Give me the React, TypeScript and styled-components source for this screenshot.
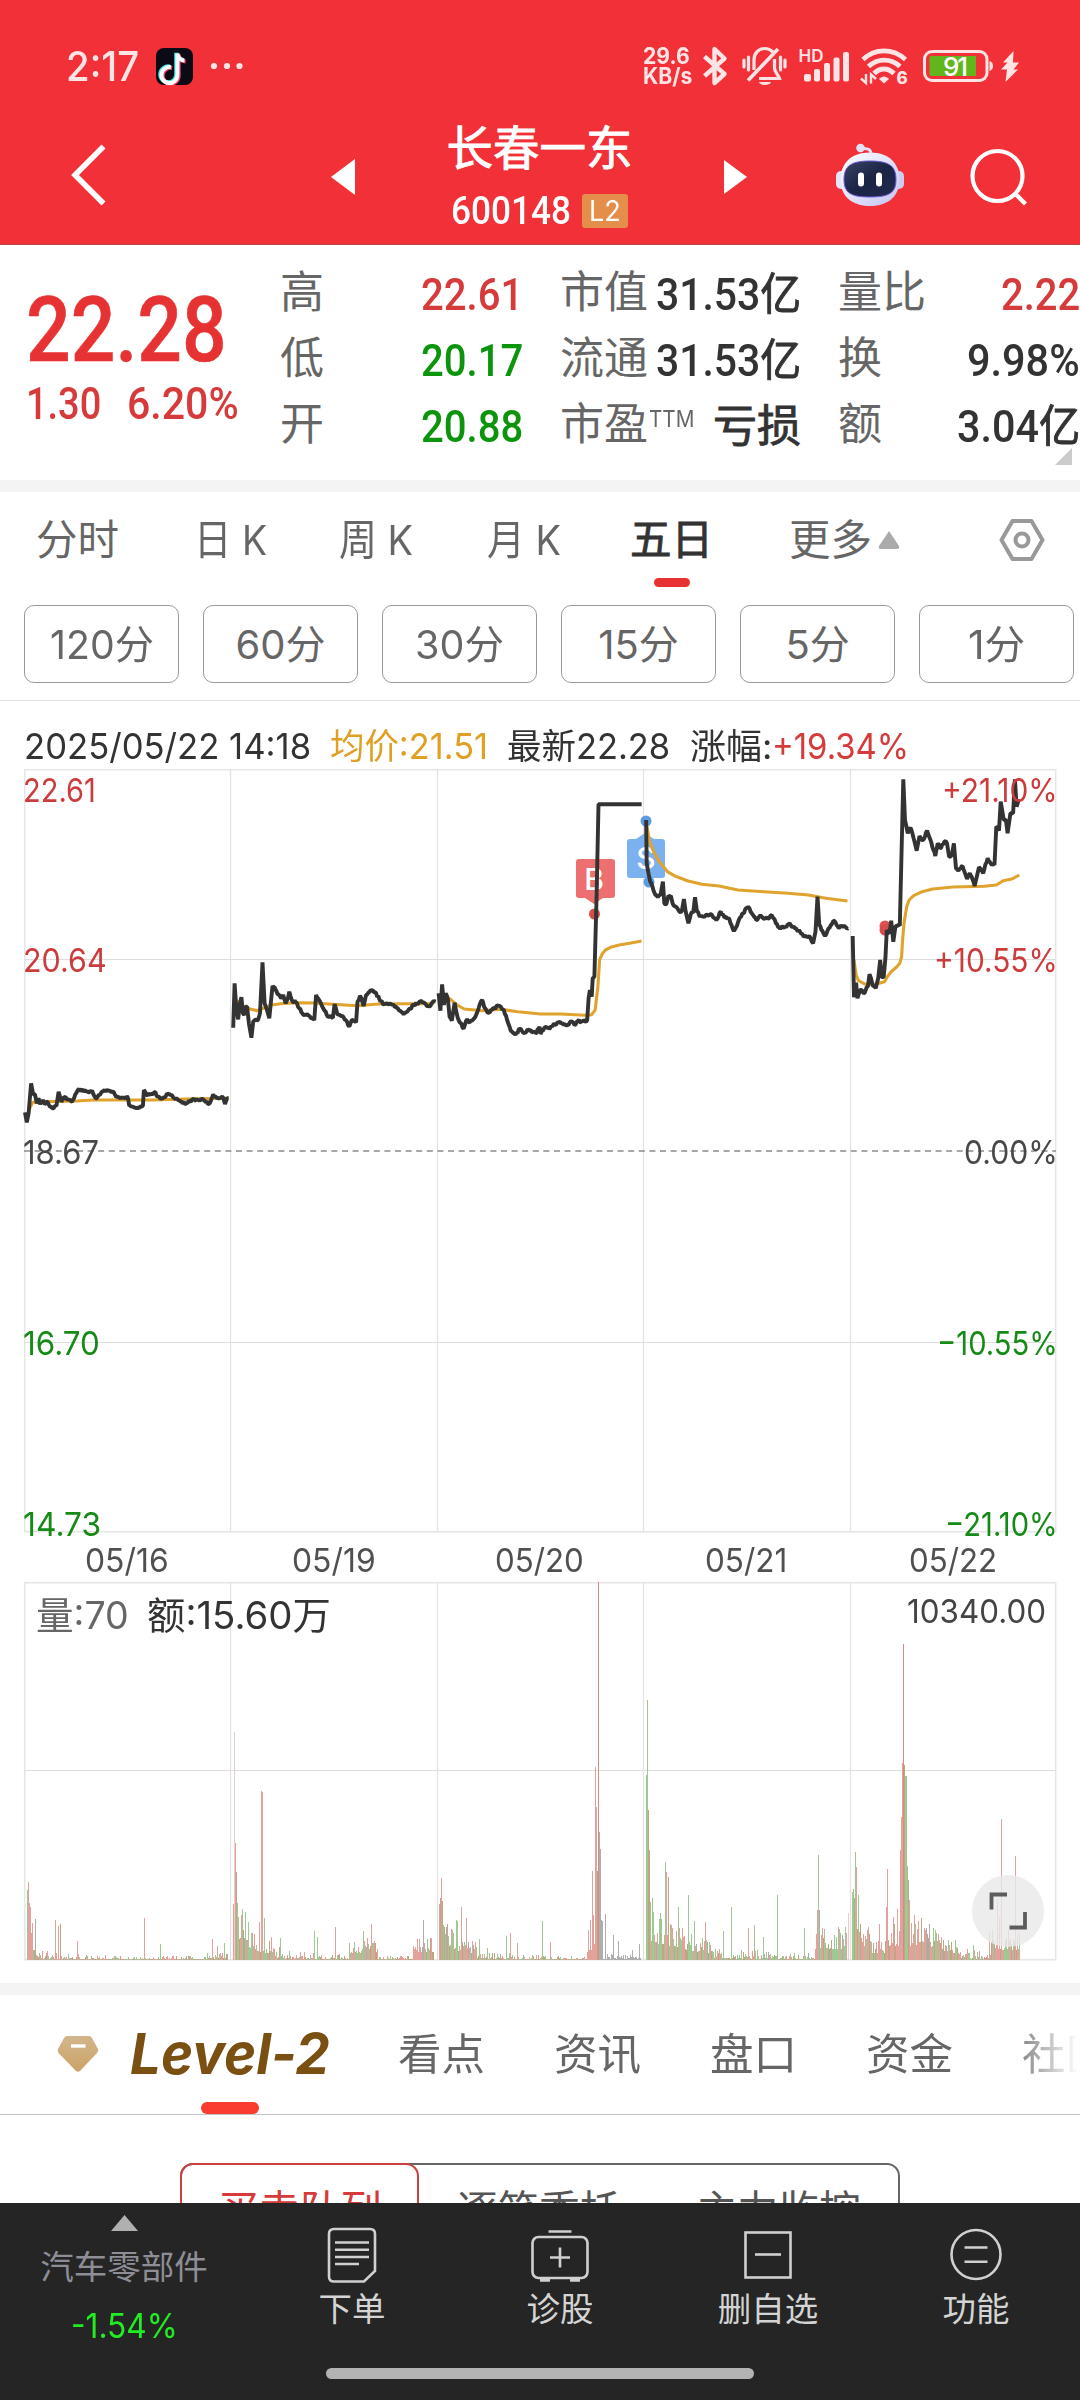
import React, { useLayoutEffect, useRef, useState } from "react";
import styled, { createGlobalStyle } from "styled-components";

const SANS = `"Inter", "Noto Sans CJK SC", sans-serif`;
const DIN = `"Roboto", "Noto Sans CJK SC", sans-serif`;
const RED = "#d63a3a";
const GREEN = "#0c940c";

const GlobalStyle = createGlobalStyle`
  * { box-sizing: border-box; }
  body { margin: 0; background: #fff; font-family: ${SANS}; }
  svg { display: block; flex: none; overflow: visible; }
`;

/* ---------- width-fitted label ---------- */
const FitBox = styled.span<{ $w: number }>`
  display: inline-block;
  width: ${(p) => p.$w}px;
  white-space: nowrap;
  flex: none;
`;
const FitInner = styled.span`
  display: inline-block;
  transform-origin: 0 50%;
`;
function Fit({ w, children }: { w: number; children: React.ReactNode }) {
  const ref = useRef<HTMLSpanElement>(null);
  const [scale, setScale] = useState(1);
  useLayoutEffect(() => {
    if (ref.current) setScale(w / ref.current.offsetWidth);
  }, [w]);
  return (
    <FitBox $w={w}>
      <FitInner ref={ref} style={{ transform: `scaleX(${scale})` }}>
        {children}
      </FitInner>
    </FitBox>
  );
}

/* ---------- shell ---------- */
const Page = styled.div`
  width: 1080px;
  height: 2400px;
  display: flex;
  flex-direction: column;
  overflow: hidden;
  background: #fff;
`;
const Main = styled.main`
  height: 2203px;
  flex: none;
  overflow: hidden;
`;
const Band = styled.div`
  height: 12px;
  background: #f4f4f4;
`;

/* ---------- header ---------- */
const Header = styled.header`
  height: 245px;
  background: #f23037;
  border-bottom: 1px solid #b8454c;
  color: #fff;
`;
const StatusBar = styled.div`
  height: 106px;
  padding: 26px 0 0 66px;
  display: flex;
  align-items: center;
  color: #ffe4e6;
`;
const Clock = styled.div`
  font-size: 41px;
  line-height: 48px;
  font-weight: 500;
  width: 90px;
`;
const StatusIcons = styled.div`
  margin-left: auto;
  width: 437px;
  display: grid;
  grid-template-columns: 60px 39px 57px 62px 62px 78px 18px;
  align-items: center;
`;
const Speed = styled.div`
  font-size: 22.5px;
  line-height: 20.5px;
  font-weight: 700;
  display: flex;
  flex-direction: column;
`;
const NavBar = styled.div`
  height: 138px;
  display: grid;
  grid-template-columns: 331px 24px 369px 24px 88px 68px 66px 60px;
  align-items: center;
`;
const BackCell = styled.div`
  padding: 0 0 0 69px;
`;
const TitleBlock = styled.div`
  display: flex;
  flex-direction: column;
  align-items: center;
  padding-bottom: 3px;
`;
const Title = styled.h1`
  margin: 0;
  font-size: 46.5px;
  line-height: 56px;
  font-weight: 400;
  -webkit-text-stroke: 0.9px currentColor;
`;
const CodeRow = styled.div`
  display: flex;
  align-items: center;
  gap: 11px;
  font: 500 39px/34px ${DIN};
  margin-top: 18px;
`;
const LevelBadge = styled.span`
  width: 46px;
  height: 34px;
  border-radius: 3px;
  background: #e58d4a;
  font: 400 28px/34px ${SANS};
  display: flex;
  justify-content: center;
`;

/* ---------- quote ---------- */
const Quote = styled.section`
  height: 235px;
  display: grid;
  grid-template-columns: 243px 242px 240px 241px;
  column-gap: 38px;
  position: relative;
`;
const PriceCol = styled.div`
  padding: 41px 0 0 26px;
  color: #e63232;
`;
const Price = styled.div`
  font: 500 90px/90px ${DIN};
  -webkit-text-stroke: 0.6px currentColor;
`;
const Change = styled.div`
  margin-top: 6px;
  display: flex;
  gap: 26px;
  color: ${RED};
  font: 500 44px/44px ${DIN};
`;
const StatCol = styled.div`
  padding-top: 14px;
`;
const Stat = styled.div`
  height: 66px;
  display: flex;
  justify-content: space-between;
  align-items: center;
  color: #666;
  font-size: 44px;
  line-height: 66px;
  margin-left: -1px;
  white-space: nowrap;
`;
const StatValue = styled.span<{ $c?: string }>`
  color: ${(p) => p.$c || "#333"};
  font: 500 44px/66px ${DIN};
  padding-top: 5px;
`;
const Unit = styled.span`
  font-weight: 400;
  -webkit-text-stroke: 0.9px currentColor;
`;
const Sup = styled.span`
  font-size: 23px;
  line-height: 20px;
  display: inline-block;
  transform: translateY(-13px);
  margin-left: 1px;
`;
const Corner = styled.i`
  position: absolute;
  right: 8px;
  bottom: 15px;
  border-bottom: 17px solid #ccc;
  border-left: 17px solid transparent;
`;

/* ---------- period tabs ---------- */
const PeriodTabs = styled.nav`
  height: 95px;
  padding-left: 36px;
  display: flex;
  align-items: center;
`;
const PeriodTab = styled.div<{ $w: number; $active?: boolean }>`
  width: ${(p) => p.$w}px;
  height: 95px;
  line-height: 94px;
  font-size: 41.5px;
  color: ${(p) => (p.$active ? "#333" : "#666")};
  -webkit-text-stroke: ${(p) => (p.$active ? "0.9px #333" : "0")};
  position: relative;
  display: flex;
  align-items: center;
  gap: 6px;
`;
const Underline = styled.i<{ $x: number; $w: number; $h: number; $c: string }>`
  position: absolute;
  left: ${(p) => p.$x}px;
  bottom: 0;
  width: ${(p) => p.$w}px;
  height: ${(p) => p.$h}px;
  border-radius: ${(p) => p.$h / 2}px;
  background: ${(p) => p.$c};
`;
const SettingsCell = styled.div`
  margin: 0 35px 0 auto;
`;
const Pills = styled.div`
  padding: 18px 0 17px 24px;
  display: flex;
  gap: 24px;
  border-bottom: 1px solid #e0e0e0;
`;
const Pill = styled.button`
  flex: none;
  width: 155px;
  height: 78px;
  border: 1px solid #999;
  border-radius: 10px;
  background: #fff;
  color: #666;
  font: 400 40px/76px ${SANS};
  padding: 1px 0 0;
`;

/* ---------- chart ---------- */
const InfoLine = styled.div`
  height: 68px;
  padding: 23px 0 0 24px;
  display: flex;
  font-size: 35.5px;
  line-height: 46px;
  color: #333;
`;
const InfoItem = styled.span<{ $c?: string; $gap?: number }>`
  color: ${(p) => p.$c || "#333"};
  margin-left: ${(p) => p.$gap || 0}px;
`;
const Pane = styled.div<{ $h: number }>`
  position: relative;
  width: 1032px;
  height: ${(p) => p.$h}px;
  margin-left: 24px;
`;
const AxisLabel = styled.span<{ $y: number; $c: string; $right?: boolean }>`
  position: absolute;
  top: ${(p) => p.$y - 20}px;
  ${(p) => (p.$right ? "right: -2px;" : "left: -1px;")}
  color: ${(p) => p.$c};
  font-size: 33px;
  line-height: 40px;
`;
const Dates = styled.div`
  height: 50px;
  margin-left: 24px;
  width: 1032px;
  display: grid;
  grid-template-columns: repeat(5, 1fr);
  justify-items: center;
  font-size: 33px;
  line-height: 57px;
  color: #505050;
`;
const VolumeText = styled.div`
  position: absolute;
  left: 12px;
  right: 10px;
  top: 11px;
  display: flex;
  gap: 18px;
  font-size: 38px;
  line-height: 44px;
  color: #333;
`;
const VolumeQty = styled.span`
  color: #666;
`;
const VolumeMax = styled.span`
  margin-left: auto;
  font-size: 32.5px;
  line-height: 37px;
  color: #444;
`;
const ExpandButton = styled.button`
  position: absolute;
  left: 948px;
  top: 293px;
  width: 72px;
  height: 72px;
  border: 0;
  border-radius: 50%;
  background: rgba(233, 233, 233, 0.82);
  padding: 0;
`;
const ChartFoot = styled.div`
  height: 23px;
`;

/* ---------- detail tabs ---------- */
const DetailBar = styled.div`
  border-bottom: 1px solid #c4c4c4;
`;
const DetailTabs = styled.nav`
  height: 119px;
  padding-left: 57px;
  display: flex;
  overflow: hidden;
  mask-image: linear-gradient(to right, #000 1005px, transparent 1078px);
`;
const Gem = styled.div`
  flex: none;
  width: 73px;
  padding-top: 41px;
`;
const LevelTab = styled.div`
  position: relative;
  width: 268px;
  flex: none;
  color: #7a4f12;
  font: italic 700 56px/119px ${SANS};
`;
const DetailTab = styled.div`
  width: 156px;
  flex: none;
  font-size: 43.5px;
  line-height: 118px;
  color: #666;
  white-space: nowrap;
`;
const Segments = styled.div`
  margin: 48px 0 0 180px;
  width: 720px;
  height: 92px;
  border: 2px solid #666;
  border-radius: 13px;
  display: flex;
`;
const Segment = styled.div<{ $active?: boolean }>`
  width: 240px;
  height: 92px;
  margin: -2px 0 0 ${(p) => (p.$active ? "-2px" : "0")};
  border: 2px solid ${(p) => (p.$active ? "#cc3f3f" : "transparent")};
  border-radius: 13px;
  color: ${(p) => (p.$active ? "#d63a3a" : "#555")};
  font-size: 41px;
  line-height: 90px;
  text-align: center;
  white-space: nowrap;
`;

/* ---------- bottom bar ---------- */
const BottomBar = styled.footer`
  height: 197px;
  background: #252525;
  color: #d4d4d4;
  display: flex;
  flex-direction: column;
  align-items: center;
`;
const BottomRow = styled.div`
  width: 1080px;
  height: 165px;
  display: grid;
  grid-template-columns: 248px repeat(4, 208px);
`;
const Sector = styled.div`
  display: flex;
  flex-direction: column;
  align-items: center;
  padding-top: 12px;
  font-size: 33.5px;
  line-height: 38px;
  color: #8e8e96;
`;
const SectorName = styled.div`
  margin-top: 17px;
`;
const SectorChange = styled.div`
  margin-top: 21px;
  color: #22ec22;
  font-size: 34px;
`;
const Action = styled.div`
  display: flex;
  flex-direction: column;
  align-items: center;
  font-size: 33.5px;
  line-height: 38px;
`;
const ActionIcon = styled.div`
  height: 87px;
  padding-top: 22px;
`;
const HomeBar = styled.div`
  width: 428px;
  height: 11px;
  border-radius: 6px;
  background: #b3b3b3;
`;

/* ---------- price series ---------- */
type Pt = [number, number];
const parse = (s: string): Pt[] => s.trim().split(/\s+/).map((p) => p.split(",").map(Number) as Pt);

function rng(seed: number) {
  let s = seed;
  return () => {
    s = (s * 1664525 + 1013904223) % 4294967296;
    return s / 4294967296;
  };
}
const toPane = (pts: Pt[], half: 0 | 1): Pt[] =>
  pts.map(([x, y]) => [half ? 516 + x / 2.904 : x / 2.8 - 24, y / 3 - 9]);

/* minute ticks between the sampled prices */
function ticks(pts: Pt[], seed: number): Pt[] {
  const r = rng(seed);
  const out: Pt[] = [];
  for (let i = 0; i < pts.length - 1; i++) {
    const [x0, y0] = pts[i];
    const [x1, y1] = pts[i + 1];
    out.push(pts[i]);
    const dx = x1 - x0;
    if (dx > 25 || Math.abs(y1 - y0) / Math.max(dx, 0.1) > 4) continue;
    const n = Math.floor(dx / 0.95);
    for (let k = 1; k < n; k++) out.push([x0 + (dx * k) / n, y0 + ((y1 - y0) * k) / n + (r() - 0.5) * 3]);
  }
  out.push(pts[pts.length - 1]);
  return out;
}
const line = (pts: Pt[]) => pts.map(([x, y]) => `${x.toFixed(1)},${y.toFixed(1)}`).join(" ");

const P1 = toPane(parse("70,1057 75,1087 80,1060 87,970 93,1003 98,1003 103,1030 108,1015 112,1033 120,1020 125,1033 133,1025 140,1040 150,1045 158,1038 164,995 172,1025 180,1012 190,1018 202,1025 213,1000 218,990 235,992 247,997 258,992 268,1015 280,1005 290,993 315,995 325,1010 340,1012 358,1013 362,1038 378,1045 400,1038 403,990 410,1005 432,997 445,1010 455,1017 470,1002 485,1012 500,1022 520,1031 540,1018 570,1020 585,1032 592,1018 597,1003 605,1013 625,1013 630,1032 636,1015 640,1015"), 0);
const P2 = toPane(parse("653,803 657,670 662,750 667,778 671,735 676,712 680,760 684,765 688,740 692,740 697,790 704,833 709,785 714,780 722,780 728,760 735,607 741,730 746,745 754,775 763,678 772,690 780,703 787,715 793,705 800,730 806,715 810,695 817,720 828,727 838,745 850,765 860,762 868,770 880,780 885,705 895,722 905,745 915,765 932,773 937,732 944,760 955,768 965,778 978,800 985,780 997,787 1001,725 1008,707 1018,738 1025,705 1038,690 1050,697 1062,717 1075,733 1090,732 1105,740 1120,752 1130,763 1145,747 1160,735 1180,722 1195,738 1205,738 1212,725 1220,725"), 0);
const P3 = [
  ...toPane(parse("1228,700 1233,752 1238,673 1243,735 1248,700 1254,718 1259,770 1265,782 1273,728 1278,757 1285,782 1298,806 1308,778 1315,788 1325,778 1335,760 1340,745 1350,720 1358,745 1368,758 1378,750 1395,737 1410,748 1420,780 1430,812 1443,825 1455,807 1465,818 1480,810 1500,820 1511,800"), 0),
  ...toPane(parse("2,822 12,805 30,803 50,788 80,795 90,783 100,795 110,783 130,783 137,780 141,715 145,690 150,710 153,655 158,650 164,420 170,133 295,133"), 1),
];
const P4 = toPane(parse("308,180 310,310 315,340 320,365 326,378 330,392 335,405 342,412 350,405 357,365 361,430 367,432 373,407 380,408 385,430 395,440 405,455 412,452 418,417 423,455 431,490 438,462 445,458 450,412 456,455 465,470 480,467 500,466 515,477 525,455 535,472 550,478 563,513 575,487 590,460 605,440 615,460 628,480 640,465 650,477 665,475 673,465 685,490 695,502 715,502 725,490 740,505 755,515 770,528 785,533 793,550 800,515 806,410 811,495 820,512 828,528 838,505 852,482 865,500 880,500 895,505"), 1);
const P5 = toPane(parse("908,528 912,712 918,668 922,715 930,690 940,700 952,680 957,643 965,672 975,685 982,655 988,600 992,650 998,650 1003,595 1007,510 1015,520 1020,482 1026,545 1032,500 1045,497 1055,58 1060,180 1068,220 1076,203 1085,235 1094,272 1102,228 1112,240 1124,212 1134,240 1148,288 1155,250 1162,265 1174,245 1182,250 1188,290 1196,285 1202,250 1208,325 1215,333 1227,318 1240,357 1248,340 1262,378 1275,322 1287,340 1300,295 1312,315 1320,315 1325,200 1333,212 1338,125 1347,180 1353,180 1358,220 1366,160 1374,160 1379,58 1384,140 1390,118"), 1);

const AVERAGES: Pt[][] = [
  toPane(parse("80,1055 85,1040 92,1027 110,1025 215,1023 260,1020 430,1020 520,1017 640,1015"), 0),
  toPane(parse("660,720 685,740 700,747 720,752 760,735 785,731 830,728 880,729 920,732 1000,737 1060,732 1150,731 1215,731"), 0),
  [
    ...toPane(parse("1238,700 1260,717 1280,735 1300,747 1350,752 1400,748 1450,755 1513,762"), 0),
    ...toPane(parse("60,762 130,766 150,764 160,750 168,680 173,600 180,583 190,570 205,562 230,555 260,550 295,543"), 1),
  ],
  toPane(parse("310,195 318,245 330,275 345,303 360,322 370,335 390,347 430,363 470,373 520,378 575,390 650,395 720,400 780,405 830,415 893,423"), 1),
  toPane(parse("912,600 918,645 925,662 945,673 965,675 985,670 1000,665 1010,648 1020,635 1035,622 1045,610 1050,590 1053,540 1057,490 1065,440 1072,420 1085,407 1110,395 1140,387 1200,381 1290,379 1325,375 1345,362 1370,357 1392,345"), 1),
];
const GRID_X = [206.5, 413.5, 619.5, 826.5];

function PriceChart() {
  return (
    <svg width="1032" height="763" viewBox="0 0 1032 763">
      <rect x="0.7" y="0.7" width="1031" height="762" fill="none" stroke="#e6e6e6" strokeWidth="1.6" />
      {GRID_X.map((x) => (
        <line key={x} x1={x} x2={x} y1="0" y2="763" stroke="#e2e2e2" strokeWidth="1.2" />
      ))}
      {[190.5, 573.5].map((y) => (
        <line key={y} x1="0" x2="1032" y1={y} y2={y} stroke="#dedede" />
      ))}
      <line x1="0" x2="1032" y1="382" y2="382" stroke="#8a8a8a" strokeWidth="1.6" strokeDasharray="6 4.6" />
      <g fill="#ee6f6f">
        <path d="M555 90h33a3 3 0 0 1 3 3v33a3 3 0 0 1-3 3h-9l-9 6-9-6h-6a3 3 0 0 1-3-3V93a3 3 0 0 1 3-3z" />
        <circle cx="570.5" cy="145" r="5.5" fill="#d94c4c" />
      </g>
      <g fill="#7cb1ef">
        <path d="M606 70h6l9-6 9 6h8a3 3 0 0 1 3 3v33a3 3 0 0 1-3 3h-32a3 3 0 0 1-3-3V73a3 3 0 0 1 3-3z" />
        <circle cx="622" cy="52" r="5.5" fill="#5c9be0" />
        <circle cx="625" cy="113" r="5.5" fill="#5c9be0" />
      </g>
      <g fill="#fff" fontFamily="Inter, sans-serif" fontSize="30" fontWeight="500" textAnchor="middle">
        <text x="570" y="121">B</text>
        <text x="622" y="100">S</text>
      </g>
      <circle cx="861" cy="157" r="5.5" fill="#e05050" />
      <circle cx="861" cy="161" r="5.5" fill="#d94c4c" />
      <g fill="none" strokeLinejoin="round">
        {AVERAGES.map((a, i) => (
          <polyline key={i} points={line(a)} stroke="#dfa32e" strokeWidth="3.1" />
        ))}
      </g>
      <g fill="none" stroke="#333" strokeWidth="3.9" strokeLinejoin="bevel">
        {[P1, P2, P3, P4, P5].map((p, i) => (
          <polyline key={i} points={line(ticks(p, 17 + i * 31))} />
        ))}
      </g>
    </svg>
  );
}

/* ---------- volume series: x, height, tone ---------- */
const SPIKES = `27,70,g 28,78,r 29,57,r 30,53,r 31,27,r 32,37,r 35,41,k 55,40,r 58,34,r 60,36,b 77,19,r 144,42,r 160,16,g 212,21,r 217,14,r 224,17,g
233,56,r 234,228,p 235,117,r 236,88,b 237,57,g 238,43,g 241,45,r 242,51,g 245,48,g 248,38,g 252,27,r 259,38,r 261,169,r 262,168,r 264,42,g 271,23,r 280,22,g 314,29,g 317,23,g 335,33,r 363,29,g 367,22,r 371,36,r 423,40,k 427,21,g 431,22,r
439,56,r 440,62,b 441,82,r 442,59,b 443,35,g 447,36,k 451,31,r 456,40,g 457,39,g 461,53,r 466,42,r 479,21,g 506,24,g 510,27,r 517,17,r 542,39,g 550,18,r
588,30,r 590,40,r 592,89,r 593,45,r 595,193,r 596,153,r 597,89,b 598,378,R 599,128,k 600,111,k 601,34,k 602,34,k 605,46,k 613,25,k 618,19,k 632,10,k 639,16,k
646,185,g 647,260,g 648,150,b 649,110,b 650,57,g 652,62,g 653,48,g 660,45,g 665,98,g 666,88,r 668,83,b 671,35,g 678,53,g 682,32,r 688,65,g 694,39,g 705,38,r 723,29,g 731,53,g 748,32,r 754,35,g 763,23,g 777,65,g 804,32,g 817,50,r 818,105,g 819,50,k 834,25,g 838,33,r 845,33,g 848,47,p
852,68,g 853,71,g 854,62,b 855,108,g 856,93,r 858,65,g 860,36,b 868,33,r 879,36,r 886,53,r 887,91,r 893,34,r 897,51,r 900,110,r 901,143,r 902,197,r 903,316,R 904,195,b 905,184,g 906,184,g 907,94,g 908,80,b 909,60,r 914,45,r 918,39,r 925,30,r 933,32,g 948,20,g 955,20,g 973,15,g 989,28,r 997,60,r 999,43,r 1001,141,r 1015,104,r 1017,25,r`
  .trim()
  .split(/\s+/)
  .map((s) => s.split(","));

const TONES: Record<string, string> = {
  r: "#e4a09a",
  R: "#d98a84",
  g: "#9fc992",
  b: "#bba783",
  k: "#aeaeae",
  p: "#ecccc8",
};

function volumeBars() {
  const r = rng(91);
  const bars: { x: number; h: number; c: string }[] = [];
  const dayOf = (x: number) => Math.min(4, Math.floor((x - 24) / 206.5));
  const limit = (x: number) => {
    const d = dayOf(x);
    const t = (x - 24 - d * 206.5) / 206.5;
    if (d === 0) return 5 + 18 * Math.exp(-t * 7) + (t > 0.88 ? 6 : 0);
    if (d === 1) return 5 + 44 * Math.exp(-t * 6) + (Math.abs(t - 0.64) < 0.07 ? 14 : 0) + (t > 0.88 ? 17 : 0);
    if (d === 2) {
      if (t > 0.72 && t < 0.8) return 14 + (t - 0.72) * 500;
      if (t >= 0.8) return 8;
      return 4 + 44 * Math.exp(-t * 6);
    }
    if (d === 3) return 9 + 58 * Math.exp(-t * 5.5) + (t > 0.83 ? 22 : 0);
    if (t < 0.1) return 50 - t * 200;
    if (t < 0.17) return 20;
    if (t < 0.36) return 42;
    return 8 + 42 * Math.exp(-(t - 0.36) * 9) + (t > 0.68 ? 20 : 0);
  };
  for (let x = 25; x < 1020; x++) {
    const t = ((x - 24) % 206.5) / 206.5;
    if (t > 0.985 || t < 0.01) continue;
    const paused = x > 598 && x < 642;
    const v = r();
    const base = limit(x);
    const h = Math.max(1.5, base * (v * v * 0.72 + (base > 18 ? 0.34 : 0.1)));
    const pick = r();
    const red = dayOf(x) === 3 ? 0.3 : 0.42;
    bars.push({ x, h, c: paused ? "k" : x > 585 && x < 598 ? "r" : pick < red ? "r" : pick < 0.75 ? "g" : pick < 0.94 ? "b" : "k" });
  }
  return bars;
}

function VolumeChart() {
  return (
    <svg width="1032" height="378" viewBox="0 0 1032 378">
      <rect x="0.7" y="0.7" width="1031" height="377" fill="none" stroke="#e6e6e6" strokeWidth="1.6" />
      {GRID_X.map((x) => (
        <line key={x} x1={x} x2={x} y1="0" y2="378" stroke="#e2e2e2" strokeWidth="1.2" />
      ))}
      <line x1="0" x2="1032" y1="188.5" y2="188.5" stroke="#dedede" />
      <g shapeRendering="crispEdges">
        {volumeBars().map((b, i) => (
          <rect key={i} x={b.x - 24} y={378 - b.h} width="1" height={b.h} fill={TONES[b.c]} />
        ))}
        {SPIKES.map(([x, h, c], i) => (
          <rect key={i} x={+x - 24} y={378 - +h} width="1" height={+h} fill={TONES[c]} />
        ))}
      </g>
    </svg>
  );
}

/* ---------- icons ---------- */
const note = "M24 5v21.5a8 8 0 1 1-6.5-7.9M24 5c.6 4.4 3.3 6.8 7 7";
const TikTok = () => (
  <svg width="37" height="37" viewBox="0 0 37 37">
    <rect width="37" height="37" rx="8" fill="#0c0a14" />
    <g fill="none" strokeWidth="4" transform="translate(-2.6 .6)">
      <path d={note} stroke="#35e0dc" transform="translate(-1.2 -.8)" />
      <path d={note} stroke="#f2436b" transform="translate(1.2 .8)" />
      <path d={note} stroke="#fff" />
    </g>
  </svg>
);
const Dots = () => (
  <svg width="60" height="10" viewBox="0 0 60 10" fill="#ffe4e6">
    <circle cx="21" cy="5" r="3.1" />
    <circle cx="34" cy="5" r="3.1" />
    <circle cx="46.5" cy="5" r="3.1" />
  </svg>
);
const Bluetooth = () => (
  <svg width="25" height="40" viewBox="0 0 25 40" fill="none" stroke="#ffe4e6" strokeWidth="4.4" strokeLinejoin="round">
    <path d="M1.500 10.500l20 17.500L11.500 37V3l10 9.500L1.500 30" />
  </svg>
);
const Muted = () => (
  <svg width="45" height="40" viewBox="0 0 45 40" fill="none" stroke="#ffe4e6" strokeWidth="3.2">
    <path d="M2 14v7M6.500 11v13M38.500 11v13M43 14v7" strokeLinecap="round" />
    <path d="M12 24V14c0-7 5-11.500 10.500-11.500 3.500 0 6.500 1.500 8.500 3.500M32.500 13v9c0 4 4 7 5 10.500H17" />
    <path d="M6 34.500L36 3" strokeWidth="3.600" />
    <path d="M17 36h12c-1 4-11 4-12 0z" fill="#ffe4e6" stroke="none" />
  </svg>
);
const Signal = () => (
  <svg width="52" height="40" viewBox="0 0 52 40" fill="#ffe4e6">
    <text x="-0.500" y="15.500" fontFamily="Inter, sans-serif" fontSize="17" fontWeight="600">HD</text>
    <rect x="5" y="28" width="7" height="7.500" rx="2" />
    <rect x="15" y="23" width="6" height="12.500" rx="2" />
    <rect x="25" y="17" width="6" height="18.500" rx="2" />
    <rect x="34.500" y="11.500" width="6" height="24" rx="2" />
    <rect x="44" y="6" width="6" height="29.500" rx="2" />
  </svg>
);
const Wifi = () => (
  <svg width="48" height="40" viewBox="0 0 48 40" fill="none" stroke="#ffe4e6" strokeWidth="4.800">
    <path d="M2 13.500C14 2 32 2 44.500 13.500M7.500 20.500c9-8.500 22.500-8.500 31.500 0M13 27.500c6-6 14-6 20 0" />
    <path d="M23 37.500l-5-4.500c3-3.500 7-3.500 10 0z" fill="#ffe4e6" stroke="none" />
    <path d="M0 32.500l5 4.500V28M15 33l-5-4.500v9" strokeWidth="2.400" />
    <text x="35.500" y="38" fontFamily="Inter, sans-serif" fontSize="17" fontWeight="800" fill="#ffe4e6" stroke="none">6</text>
  </svg>
);
const Battery = () => (
  <svg width="72" height="34" viewBox="0 0 72 34">
    <rect x="1.500" y="2.500" width="62.500" height="29" rx="7.500" fill="none" stroke="#ffe4e6" strokeWidth="3" />
    <path d="M8 7h45v20H8q-1.500 0-1.500-2V9q0-2 1.500-2z" fill="#62b51b" />
    <path d="M66.500 12q3.500 1 3.500 5t-3.500 5z" fill="#ffe4e6" />
    <text x="32.500" y="26.500" textAnchor="middle" fontFamily="Inter, sans-serif" fontSize="26" fontWeight="500" fill="#fff" textLength="25">91</text>
  </svg>
);
const Bolt = () => (
  <svg width="18" height="33" viewBox="0 0 18 33" fill="#ffe4e6">
    <path d="M12.500 1L2 12.500h4.500L0 19.500h6L4.500 32 17 19.500h-4.500L18 12.500h-6z" />
  </svg>
);
const Back = () => (
  <svg width="40" height="66" viewBox="0 0 40 66" fill="none" stroke="#fff" strokeWidth="5.500">
    <path d="M34.500 4.500L6 33l28.500 28.500" />
  </svg>
);
const Robot = () => (
  <svg width="70" height="66" viewBox="0 -1 70 66">
    <defs>
      <linearGradient id="shell" x1="0" y1="0" x2="1" y2="1">
        <stop offset="0" stopColor="#fff" />
        <stop offset=".6" stopColor="#dcdcfa" />
        <stop offset="1" stopColor="#c5c2f0" />
      </linearGradient>
      <linearGradient id="visor" x1="0" y1="0" x2="1" y2="1">
        <stop offset="0" stopColor="#3b4466" />
        <stop offset=".5" stopColor="#1a2444" />
        <stop offset="1" stopColor="#222b4e" />
      </linearGradient>
    </defs>
    <path d="M35 12c0-5-2-7-9-6.500" fill="none" stroke="#e2dff8" strokeWidth="3" />
    <circle cx="24.500" cy="5" r="4.300" fill="#e4e0f7" />
    <rect x="0" y="28" width="12" height="18" rx="5" fill="#e4e4fb" />
    <rect x="56" y="28" width="12" height="18" rx="5" fill="#cdcbf3" />
    <path d="M34 9.500c19 0 29.500 11 29.500 27S53 63 34 63 4.500 52.500 4.500 36.500s10.500-27 29.500-27z" fill="url(#shell)" />
    <path d="M34 18c19 0 26 5 26 18.500S53 54 34 54 8 50 8 36.500 15 18 34 18z" fill="url(#visor)" stroke="#6a5bd6" strokeWidth="1" />
    <rect x="22" y="29.500" width="6" height="14" rx="3" fill="#fff" />
    <rect x="40" y="29.500" width="6" height="14" rx="3" fill="#fff" />
  </svg>
);
const Search = () => (
  <svg width="60" height="60" viewBox="0 -3 60 60" fill="none" stroke="#fff" strokeWidth="4.200">
    <circle cx="27.500" cy="28" r="25" />
    <path d="M45.500 46l10 10" />
  </svg>
);
const Hexagon = () => (
  <svg width="46" height="44" viewBox="0 0 46 44" fill="none" stroke="#999" strokeWidth="4" strokeLinejoin="round">
    <path d="M13.500 3h19L43.500 22 32.500 41h-19L2.500 22z" />
    <circle cx="23" cy="22" r="6.500" />
  </svg>
);
const Triangle = ({ w, h, d, c }: { w: number; h: number; d: string; c: string }) => (
  <svg width={w} height={h} viewBox={`0 0 ${w} ${h}`} fill={c}>
    <path d={d} />
  </svg>
);
const GemIcon = () => (
  <svg width="42" height="36" viewBox="0 0 42 36">
    <defs>
      <linearGradient id="gem" x1="0" y1="0" x2="0" y2="1">
        <stop offset="0" stopColor="#d3b58c" />
        <stop offset="1" stopColor="#cca268" />
      </linearGradient>
    </defs>
    <path d="M10 0h22q2 0 3 2l6 11q1 2-1 4L23 35q-2 1.500-4 0L1.500 17q-1.500-2-.5-4L7 2q1-2 3-2z" fill="url(#gem)" />
    <path d="M14 10h14.500" stroke="#fff" strokeWidth="3.400" />
  </svg>
);
const Expand = () => (
  <svg width="72" height="72" viewBox="0 0 72 72" fill="none" stroke="#5c5c5c" strokeWidth="3.800">
    <path d="M19.500 34.500V19.500H35M53 37v15.500H37.500" />
  </svg>
);
const iconProps = { fill: "none", stroke: "#d0d0d0", strokeWidth: 2.6 };
const OrderIcon = () => (
  <svg width="50" height="58" viewBox="0 0 50 58" {...iconProps}>
    <path d="M7 4h36q5 0 5 5v37L37 56.500H7q-5 0-5-5V9q0-5 5-5z" />
    <path d="M8 17.500h34M8 24.700h34M8 32h34M8 39h24" />
  </svg>
);
const DiagnoseIcon = () => (
  <svg width="58" height="58" viewBox="0 0 58 58" {...iconProps}>
    <rect x="1.500" y="12" width="55" height="41" rx="6" />
    <path d="M17.500 6.500h23M29 22.500v20M19 32.500h20" />
    <path d="M9 55h10M39 55h10" strokeWidth="3.500" />
  </svg>
);
const RemoveIcon = () => (
  <svg width="48" height="58" viewBox="0 0 48 58" {...iconProps}>
    <rect x="1.500" y="7.500" width="45" height="45" />
    <path d="M11 29.500h26" />
  </svg>
);
const FunctionIcon = () => (
  <svg width="52" height="58" viewBox="0 0 52 58" {...iconProps}>
    <circle cx="26" cy="29.500" r="24.500" />
    <path d="M14.500 22.500h23M14.500 36.700h23" />
  </svg>
);

/* ---------- data ---------- */
const PILLS: [string, number][] = [["120分", 104], ["60分", 90], ["30分", 89], ["15分", 81], ["5分", 64], ["1分", 57]];
const AXIS: [number, string, number, string, number, string][] = [
  [20.5, "22.61", 72, "+21.10%", 116, "#cc3c3c"],
  [190.5, "20.64", 83, "+10.55%", 124, "#cc3c3c"],
  [382.5, "18.67", 75, "0.00%", 94, "#484848"],
  [573.500, "16.70", 76, "−10.55%", 121, "#168a16"],
  [754.500, "14.73", 77, "−21.10%", 113, "#168a16"],
];
const ACTIONS: [string, () => React.ReactElement][] = [
  ["下单", OrderIcon],
  ["诊股", DiagnoseIcon],
  ["删自选", RemoveIcon],
  ["功能", FunctionIcon],
];

export default function App() {
  return (
    <Page>
      <GlobalStyle />
      <Main>
        <Header>
          <StatusBar>
            <Clock><Fit w={73}>2:17</Fit></Clock>
            <TikTok />
            <Dots />
            <StatusIcons>
              <Speed>
                <Fit w={47}>29.6</Fit>
                <Fit w={49}>KB/s</Fit>
              </Speed>
              <Bluetooth />
              <Muted />
              <Signal />
              <Wifi />
              <Battery />
              <Bolt />
            </StatusIcons>
          </StatusBar>
          <NavBar>
            <BackCell><Back /></BackCell>
            <Triangle w={24} h={36} d="M24 2v36L0 20z" c="#fff" />
            <TitleBlock>
              <Title>长春一东</Title>
              <CodeRow>
                <Fit w={120}>600148</Fit>
                <LevelBadge><Fit w={32}>L2</Fit></LevelBadge>
              </CodeRow>
            </TitleBlock>
            <Triangle w={24} h={36} d="M0 3v34l23-17z" c="#fff" />
            <span />
            <Robot />
            <span />
            <Search />
          </NavBar>
        </Header>

        <Quote>
          <PriceCol>
            <Price><Fit w={201}>22.28</Fit></Price>
            <Change>
              <Fit w={75}>1.30</Fit>
              <Fit w={112}>6.20%</Fit>
            </Change>
          </PriceCol>
          <StatCol>
            <Stat>高<StatValue $c={RED}><Fit w={102}>22.61</Fit></StatValue></Stat>
            <Stat>低<StatValue $c={GREEN}><Fit w={102}>20.17</Fit></StatValue></Stat>
            <Stat>开<StatValue $c={GREEN}><Fit w={102}>20.88</Fit></StatValue></Stat>
          </StatCol>
          <StatCol>
            <Stat>市值<StatValue><Fit w={145}>31.53<Unit>亿</Unit></Fit></StatValue></Stat>
            <Stat>流通<StatValue><Fit w={145}>31.53<Unit>亿</Unit></Fit></StatValue></Stat>
            <Stat>
              <span>市盈<Sup><Fit w={45}>TTM</Fit></Sup></span>
              <StatValue><Unit>亏损</Unit></StatValue>
            </Stat>
          </StatCol>
          <StatCol>
            <Stat>量比<StatValue $c={RED}><Fit w={79}>2.22</Fit></StatValue></Stat>
            <Stat>换<StatValue><Fit w={113}>9.98%</Fit></StatValue></Stat>
            <Stat>额<StatValue><Fit w={123}>3.04<Unit>亿</Unit></Fit></StatValue></Stat>
          </StatCol>
          <Corner />
        </Quote>
        <Band />

        <PeriodTabs>
          <PeriodTab $w={158}>分时</PeriodTab>
          <PeriodTab $w={145}><Fit w={73}>日 K</Fit></PeriodTab>
          <PeriodTab $w={148}><Fit w={74}>周 K</Fit></PeriodTab>
          <PeriodTab $w={143}><Fit w={74}>月 K</Fit></PeriodTab>
          <PeriodTab $w={159} $active>
            五日
            <Underline $x={24} $w={36} $h={9} $c="#e63232" />
          </PeriodTab>
          <PeriodTab $w={130}>
            更多
            <Triangle w={22} h={18} d="M11 0l10 15q1 3-2 3H3q-3 0-2-3z" c="#aaa" />
          </PeriodTab>
          <SettingsCell><Hexagon /></SettingsCell>
        </PeriodTabs>
        <Pills>
          {PILLS.map(([t, w]) => (
            <Pill key={t}><Fit w={w}>{t}</Fit></Pill>
          ))}
        </Pills>

        <InfoLine>
          <InfoItem><Fit w={287}>2025/05/22 14:18</Fit></InfoItem>
          <InfoItem $gap={19} $c="#dfa024"><Fit w={158}>均价:21.51</Fit></InfoItem>
          <InfoItem $gap={19}><Fit w={163}>最新22.28</Fit></InfoItem>
          <InfoItem $gap={20}><Fit w={82}>涨幅:</Fit></InfoItem>
          <InfoItem $c={RED}><Fit w={137}>+19.34%</Fit></InfoItem>
        </InfoLine>
        <Pane $h={763}>
          <PriceChart />
          {AXIS.map(([y, price, pw, pct, cw, c]) => (
            <React.Fragment key={price}>
              <AxisLabel $y={y} $c={c}><Fit w={pw + 1}>{price}</Fit></AxisLabel>
              <AxisLabel $y={y} $c={c} $right><Fit w={cw}>{pct}</Fit></AxisLabel>
            </React.Fragment>
          ))}
        </Pane>
        <Dates>
          <Fit w={84}>05/16</Fit>
          <Fit w={84}>05/19</Fit>
          <Fit w={89}>05/20</Fit>
          <Fit w={82}>05/21</Fit>
          <Fit w={88}>05/22</Fit>
        </Dates>
        <Pane $h={378}>
          <VolumeChart />
          <VolumeText>
            <VolumeQty><Fit w={93}>量:70</Fit></VolumeQty>
            <Fit w={184}>额:15.60万</Fit>
            <VolumeMax><Fit w={139}>10340.00</Fit></VolumeMax>
          </VolumeText>
          <ExpandButton><Expand /></ExpandButton>
        </Pane>
        <ChartFoot />
        <Band />

        <DetailBar>
          <DetailTabs>
            <Gem><GemIcon /></Gem>
            <LevelTab>
              <Fit w={200}>Level-2</Fit>
              <Underline $x={71} $w={58} $h={12} $c="#fa3b30" />
            </LevelTab>
            <DetailTab>看点</DetailTab>
            <DetailTab>资讯</DetailTab>
            <DetailTab>盘口</DetailTab>
            <DetailTab>资金</DetailTab>
            <DetailTab>社区</DetailTab>
          </DetailTabs>
        </DetailBar>
        <Segments>
          <Segment $active>买卖队列</Segment>
          <Segment>逐笔委托</Segment>
          <Segment>主力监控</Segment>
        </Segments>
      </Main>

      <BottomBar>
        <BottomRow>
          <Sector>
            <Triangle w={27} h={16} d="M13.5 0L27 16H0z" c="#b0b0b0" />
            <SectorName>汽车零部件</SectorName>
            <SectorChange><Fit w={107}>-1.54%</Fit></SectorChange>
          </Sector>
          {ACTIONS.map(([label, Icon]) => (
            <Action key={label}>
              <ActionIcon><Icon /></ActionIcon>
              {label}
            </Action>
          ))}
        </BottomRow>
        <HomeBar />
      </BottomBar>
    </Page>
  );
}
